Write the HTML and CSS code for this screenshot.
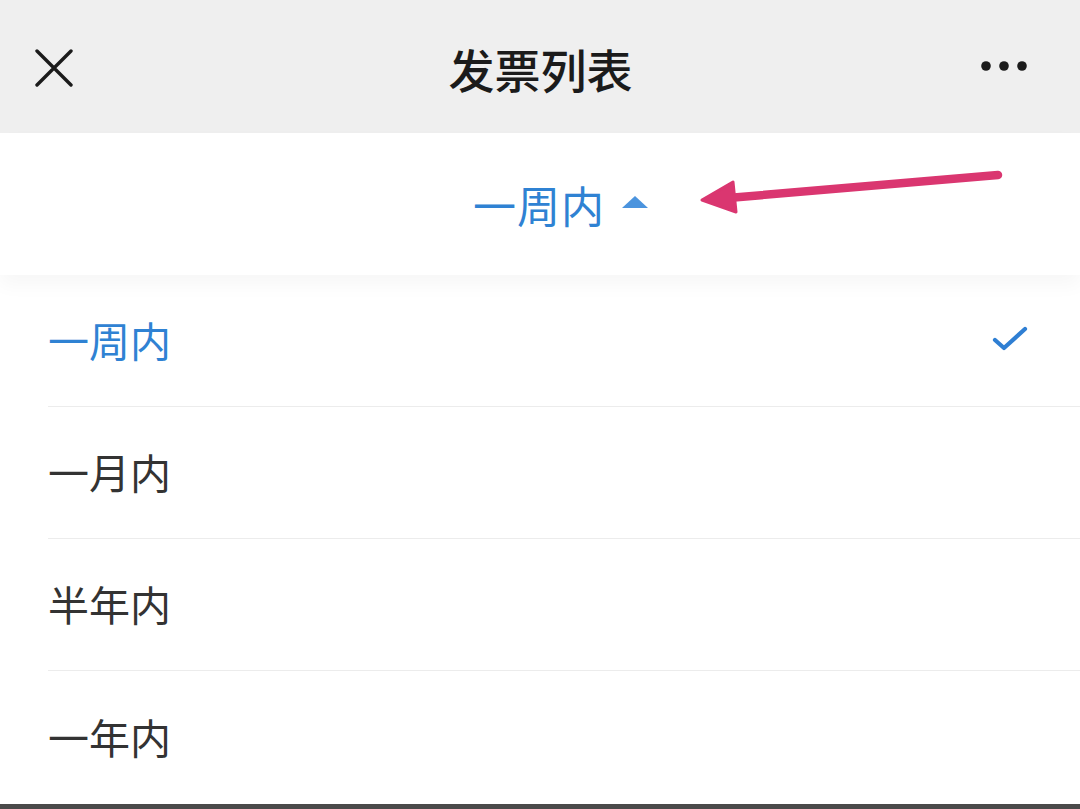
FILE: index.html
```html
<!DOCTYPE html>
<html lang="zh-CN">
<head>
<meta charset="utf-8">
<title>发票列表</title>
<link rel="stylesheet" href="styles.css">
</head>
<body>
<div class="page">
  <header class="navbar">
    <div class="nav-left">
      <svg class="icon-close" width="38" height="38" viewBox="0 0 38 38"><path d="M2 2 L36 36 M36 2 L2 36" stroke="#1b1b1b" stroke-width="3.4" stroke-linecap="round" fill="none"/></svg>
    </div>
    <h1 class="nav-title">发票列表</h1>
    <div class="nav-right">
      <svg class="icon-more" width="48" height="12" viewBox="0 0 48 12"><circle cx="6" cy="6" r="4.8" fill="#1b1b1b"/><circle cx="24" cy="6" r="4.8" fill="#1b1b1b"/><circle cx="42" cy="6" r="4.8" fill="#1b1b1b"/></svg>
    </div>
  </header>
  <div class="filter-bar">
    <span class="filter-text">一周内</span>
    <svg class="filter-caret" width="28" height="14" viewBox="0 0 28 14"><path d="M1 13 L14 1 L27 13 Z" fill="#4b94de"/></svg>
  </div>
  <ul class="options">
    <li class="option active"><span>一周内</span>
      <svg class="check" width="36" height="28" viewBox="0 0 36 28"><path d="M3 15 L12 23 L33 4" stroke="#2f7fd3" stroke-width="4.2" stroke-linecap="round" stroke-linejoin="round" fill="none"/></svg>
    </li>
    <li class="option"><span>一月内</span></li>
    <li class="option"><span>半年内</span></li>
    <li class="option"><span>一年内</span></li>
  </ul>
  <div class="bottom-bar"></div>
  <svg class="annotation" width="1080" height="809" viewBox="0 0 1080 809"><path d="M998 175 L728 198" stroke="#da3670" stroke-width="8.5" stroke-linecap="round" fill="none"/><path d="M702 200 L733 182 L736 212 Z" fill="#da3670" stroke="#da3670" stroke-width="3" stroke-linejoin="round"/></svg>
</div>
</body>
</html>
```
FILE: styles.css
```css
* { box-sizing: border-box; }
html, body { margin: 0; padding: 0; }
body {
  width: 1080px;
  height: 809px;
  overflow: hidden;
  background: #ffffff;
  font-family: "Noto Sans CJK SC", "Noto Sans", sans-serif;
}
.page {
  position: relative;
  width: 1080px;
  height: 809px;
  display: flex;
  flex-direction: column;
}
.navbar {
  height: 133px;
  background: #efefef;
  display: grid;
  grid-template-columns: 1fr auto 1fr;
  align-items: center;
  padding: 0 52px 0 35px;
}
.nav-left { display: flex; align-items: center; padding-top: 2px; }
.nav-right { display: flex; justify-content: flex-end; align-items: center; padding-bottom: 2px; }
.nav-title {
  margin: 0;
  font-size: 46px;
  font-weight: 500;
  color: #1b1b1b;
  letter-spacing: 0;
  line-height: 1;
  padding-top: 2px;
  padding-left: 18px;
}
.filter-bar {
  height: 142px;
  background: #ffffff;
  display: flex;
  justify-content: center;
  align-items: center;
  gap: 16px;
  padding-left: 42px;
  box-shadow: 0 10px 18px rgba(0, 0, 0, 0.035);
  position: relative;
  z-index: 1;
}
.filter-text {
  font-size: 43px;
  color: #2f82d3;
  line-height: 1;
  letter-spacing: 1px;
}
.filter-caret { margin-top: -4px; }
.options {
  list-style: none;
  margin: 0;
  padding: 0 0 0 48px;
  flex: 1;
}
.option {
  height: 132px;
  display: flex;
  align-items: center;
  justify-content: space-between;
  padding-right: 52px;
  border-bottom: 1px solid #ececec;
  font-size: 41px;
  color: #333333;
  line-height: 1;
}
.option:last-child { border-bottom: none; }
.option span { padding-bottom: 2px; }
.option.active { color: #2f82d3; }
.check { margin-top: -4px; }
.bottom-bar {
  height: 5px;
  background: #4a4a4a;
}
.annotation {
  position: absolute;
  left: 0;
  top: 0;
  pointer-events: none;
  z-index: 5;
}
```
